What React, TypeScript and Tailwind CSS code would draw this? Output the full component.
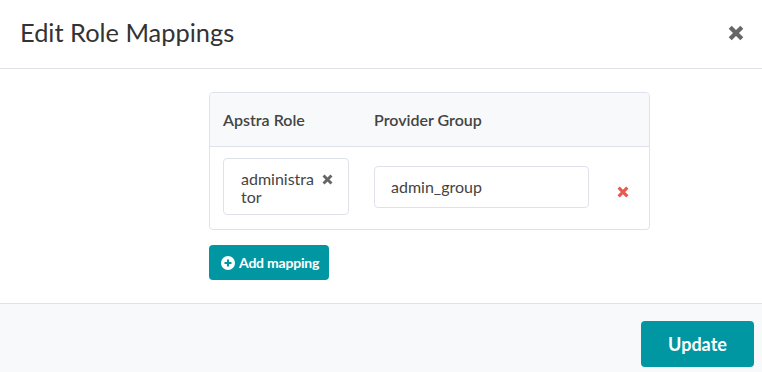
import React from "react";

function X({ className, size }: { className: string; size: number }) {
  return (
    <svg className={className} width={size} height={size} viewBox="0 0 16 16" fill="none">
      <path d="M2.2 2.2 L13.8 13.8 M13.8 2.2 L2.2 13.8" stroke="currentColor" strokeWidth="4.2" strokeLinecap="butt" />
    </svg>
  );
}

function PlusCircle() {
  return (
    <svg width="14" height="14" viewBox="0 0 16 16">
      <circle cx="8" cy="8" r="8" fill="currentColor" />
      <path d="M8 4 V12 M4 8 H12" stroke="#0097a2" strokeWidth="2.4" />
    </svg>
  );
}

export default function App() {
  return (
    <div className="w-[762px] h-[372px] bg-white overflow-hidden flex flex-col" style={{ fontFamily: "Lato, 'Open Sans', sans-serif" }}>
      <div className="h-[69px] shrink-0 flex items-center justify-between pl-[20px] pr-[18px] border-b border-[#dfe2ea]">
        <div className="text-[25.4px] text-[#333333] leading-none pb-[2px]">Edit Role Mappings</div>
        <X className="text-[#666666] mb-[2px]" size={16} />
      </div>
      <div className="h-[235px] shrink-0 pl-[209px] pt-[23px] border-b border-[#dfe2ea] flex flex-col items-start">
        <div className="w-[441px] h-[138px] border border-[#dfe2ea] rounded-[4px] overflow-hidden flex flex-col">
          <div className="h-[54px] shrink-0 bg-[#f8f9fb] border-b border-[#dfe2ea] flex items-center pl-[13px] pt-[1px] text-[16px] font-semibold text-[#444444]">
            <div className="w-[151px]">Apstra Role</div>
            <div>Provider Group</div>
          </div>
          <div className="flex-1 flex items-center pl-[13px] pb-[3px]">
            <div className="w-[126px] h-[57px] border border-[#dfe2ea] rounded-[4px] flex items-start justify-between pl-[17px] pr-[15px] pt-[11px] text-[16px] leading-[18px] text-[#444444] mr-[25px]">
              <div className="w-[74px] break-all">administrator</div>
              <X className="text-[#666666] mt-[4px]" size={11} />
            </div>
            <div className="w-[215px] h-[42px] border border-[#dfe2ea] rounded-[4px] flex items-center pl-[16px] text-[16px] text-[#444444]">admin_group</div>
            <X className="text-[#e8594f] ml-[28px] mt-[10px]" size={12} />
          </div>
        </div>
        <button className="mt-[15px] h-[35px] w-[120px] rounded-[4px] bg-[#0097a2] text-white text-[14px] font-bold flex items-center pl-[12px] gap-[4px] tracking-[-0.2px]">
          <PlusCircle />
          Add mapping
        </button>
      </div>
      <div className="flex-1 bg-[#f8f9fb] flex justify-end items-start pt-[17px] pr-[8px]">
        <button className="w-[113px] h-[46px] rounded-[4px] bg-[#0097a2] text-white text-[18px] font-bold">Update</button>
      </div>
    </div>
  );
}
